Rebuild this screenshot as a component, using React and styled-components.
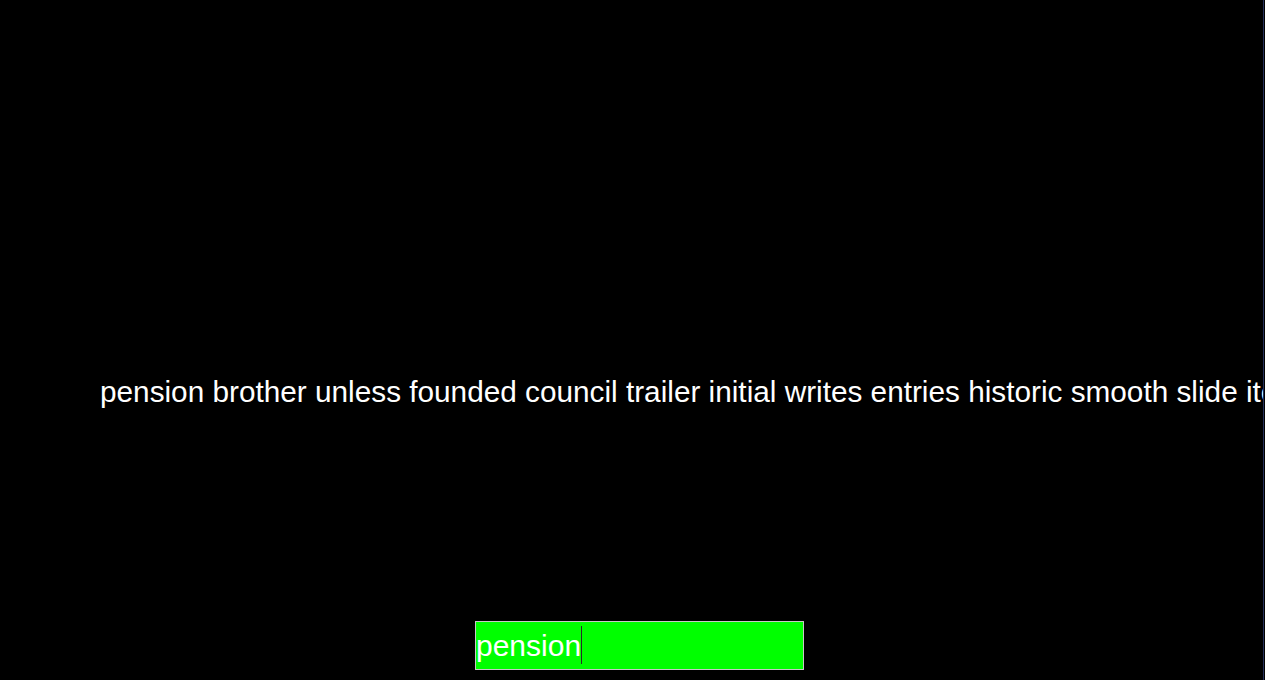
import React from "react";
import styled, { createGlobalStyle } from "styled-components";

const GlobalStyle = createGlobalStyle`
  html, body {
    margin: 0;
    padding: 0;
    background: #000000;
  }
  body {
    font-family: "Liberation Sans", Arial, sans-serif;
    overflow: hidden;
  }
`;

const Page = styled.div`
  box-sizing: content-box;
  width: 1263px;
  height: 680px;
  border-right: 1px solid #25305a;
  background: #000000;
  overflow: hidden;
  display: flex;
  flex-direction: column;
`;

const WordLine = styled.div`
  margin-top: 374px;
  padding-left: 100px;
  font-size: 29.75px;
  line-height: 35px;
  color: #ffffff;
  white-space: nowrap;
`;

const InputRow = styled.div`
  margin-top: auto;
  padding: 0 0 10px 475px;
  display: flex;
`;

const Field = styled.div`
  position: relative;
  display: flex;
`;

const TypeInput = styled.input`
  box-sizing: border-box;
  width: 329px;
  height: 49px;
  margin: 0;
  padding: 1px 0 0 0;
  border: 1px solid #c8c8c8;
  border-radius: 0;
  background: #00ff00;
  color: #ffffff;
  caret-color: transparent;
  font-family: "Liberation Sans", Arial, sans-serif;
  font-size: 30px;
  outline: none;
`;

const Caret = styled.span`
  position: absolute;
  left: 106px;
  top: 5px;
  width: 1px;
  height: 38px;
  background: #2a2a2a;
  pointer-events: none;
`;

const words =
  "pension brother unless founded council trailer initial writes entries historic smooth slide items travel perfect";

export default function App() {
  return (
    <>
      <GlobalStyle />
      <Page>
        <WordLine>{words}</WordLine>
        <InputRow>
          <Field>
            <TypeInput defaultValue="pension" spellCheck={false} />
            <Caret />
          </Field>
        </InputRow>
      </Page>
    </>
  );
}
